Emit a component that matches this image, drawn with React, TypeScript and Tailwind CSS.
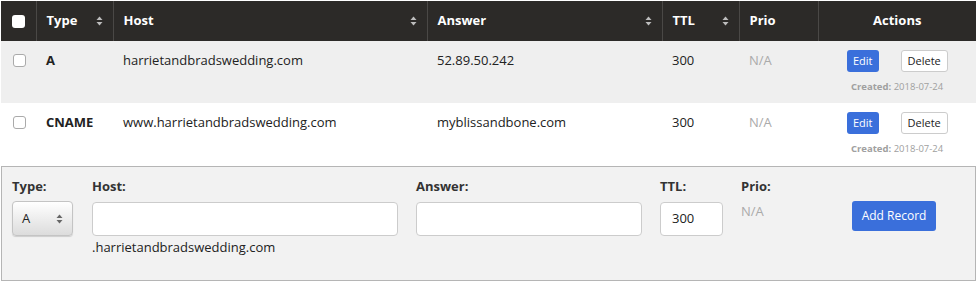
import React from 'react'

type DnsRecord = {
  type: string
  host: string
  answer: string
  ttl: number
  created: string
}

const RECORDS: DnsRecord[] = [
  { type: 'A', host: 'harrietandbradswedding.com', answer: '52.89.50.242', ttl: 300, created: '2018-07-24' },
  { type: 'CNAME', host: 'www.harrietandbradswedding.com', answer: 'myblissandbone.com', ttl: 300, created: '2018-07-24' },
]

function SortIcon({ color = '#bdbdbd' }: { color?: string }) {
  return (
    <svg width="7" height="10" viewBox="0 0 7 10">
      <path d="M3.5 0.5 L6.5 4 L0.5 4 Z" fill={color} />
      <path d="M3.5 9.5 L6.5 6 L0.5 6 Z" fill={color} />
    </svg>
  )
}

function HeaderCell({ label, sortable = true }: { label: string; sortable?: boolean }) {
  return (
    <th className="h-[40px] border-l border-[#4a4846] px-[10px] text-left font-bold">
      <div className="flex items-center justify-between">
        <span>{label}</span>
        {sortable && <SortIcon />}
      </div>
    </th>
  )
}

export default function App() {
  return (
    <div
      className="w-[978px] h-[282px] bg-white pl-[1px] pt-[1px] text-[13px] text-[#222]"
      style={{ fontFamily: '"Open Sans", "Liberation Sans", sans-serif' }}
    >
      <table className="w-[975px] table-fixed border-collapse">
        <colgroup>
          <col className="w-[35px]" />
          <col className="w-[77px]" />
          <col className="w-[314px]" />
          <col className="w-[235px]" />
          <col className="w-[77px]" />
          <col className="w-[79px]" />
          <col className="w-[158px]" />
        </colgroup>
        <thead>
          <tr className="bg-[#2c2a28] text-white text-[13px]">
            <th className="h-[40px] pl-[11px] text-left">
              <div className="w-[13px] h-[13px] rounded-[3px] bg-white" />
            </th>
            <HeaderCell label="Type" />
            <HeaderCell label="Host" />
            <HeaderCell label="Answer" />
            <HeaderCell label="TTL" />
            <HeaderCell label="Prio" sortable={false} />
            <th className="h-[40px] border-l border-[#4a4846] text-center font-bold">Actions</th>
          </tr>
        </thead>
        <tbody>
          {RECORDS.map((r, i) => (
            <tr key={r.host} className={i % 2 === 0 ? 'bg-[#efefef]' : 'bg-white'}>
              <td className="h-[62px] pl-[12px] align-top pt-[13px]">
                <div className="w-[13px] h-[13px] rounded-[3px] border border-[#aaa] bg-white" />
              </td>
              <td className="px-[10px] align-top pt-[10px] font-bold">{r.type}</td>
              <td className="px-[10px] align-top pt-[10px]">{r.host}</td>
              <td className="px-[10px] align-top pt-[10px]">{r.answer}</td>
              <td className="px-[10px] align-top pt-[10px]">{r.ttl}</td>
              <td className="px-[10px] align-top pt-[10px] text-[#aaa]">N/A</td>
              <td className="align-top pt-[9px]">
                <div className="flex items-center pl-[29px] gap-[22px]">
                  <button className="h-[22px] px-[6px] rounded-[3px] bg-[#3a6fdb] text-white text-[11px]">Edit</button>
                  <button className="h-[22px] px-[6px] rounded-[3px] border border-[#ccc] bg-white text-[11px] text-[#222]">
                    Delete
                  </button>
                </div>
                <div className="mt-[8px] pl-[33px] text-[9.5px] text-[#a0a0a0]">
                  <span className="font-bold">Created:</span> {r.created}
                </div>
              </td>
            </tr>
          ))}
        </tbody>
      </table>

      <div className="mt-[1px] w-[975px] h-[115px] border border-[#b5b5b5] bg-[#f2f2f2] flex pl-[10px] pt-[10px]">
        <div className="w-[80px]">
          <div className="font-bold text-[#333] h-[22px]">Type:</div>
          <div className="mt-[2px] w-[61px] h-[35px] rounded-[4px] border border-[#c4c4c4] bg-gradient-to-b from-white to-[#dcdcdc] shadow-[0_1px_1px_rgba(0,0,0,0.15)] flex items-center justify-between px-[9px]">
            <span>A</span>
            <SortIcon color="#666" />
          </div>
        </div>
        <div className="w-[324px]">
          <div className="font-bold text-[#333] h-[22px]">Host:</div>
          <div className="mt-[3px] w-[306px] h-[34px] rounded-[4px] border border-[#ccc] bg-white" />
          <div className="mt-[2px]">.harrietandbradswedding.com</div>
        </div>
        <div className="w-[244px]">
          <div className="font-bold text-[#333] h-[22px]">Answer:</div>
          <div className="mt-[3px] w-[226px] h-[34px] rounded-[4px] border border-[#ccc] bg-white" />
        </div>
        <div className="w-[81px]">
          <div className="font-bold text-[#333] h-[22px]">TTL:</div>
          <div className="mt-[3px] w-[63px] h-[34px] rounded-[4px] border border-[#ccc] bg-white flex items-center px-[11px]">
            300
          </div>
        </div>
        <div className="w-[111px]">
          <div className="font-bold text-[#333] h-[22px]">Prio:</div>
          <div className="mt-[3px] text-[#aaa]">N/A</div>
        </div>
        <div className="pt-[24px]">
          <button className="h-[30px] w-[84px] rounded-[3px] bg-[#3a6fdb] text-white text-[12px]">Add Record</button>
        </div>
      </div>
    </div>
  )
}
